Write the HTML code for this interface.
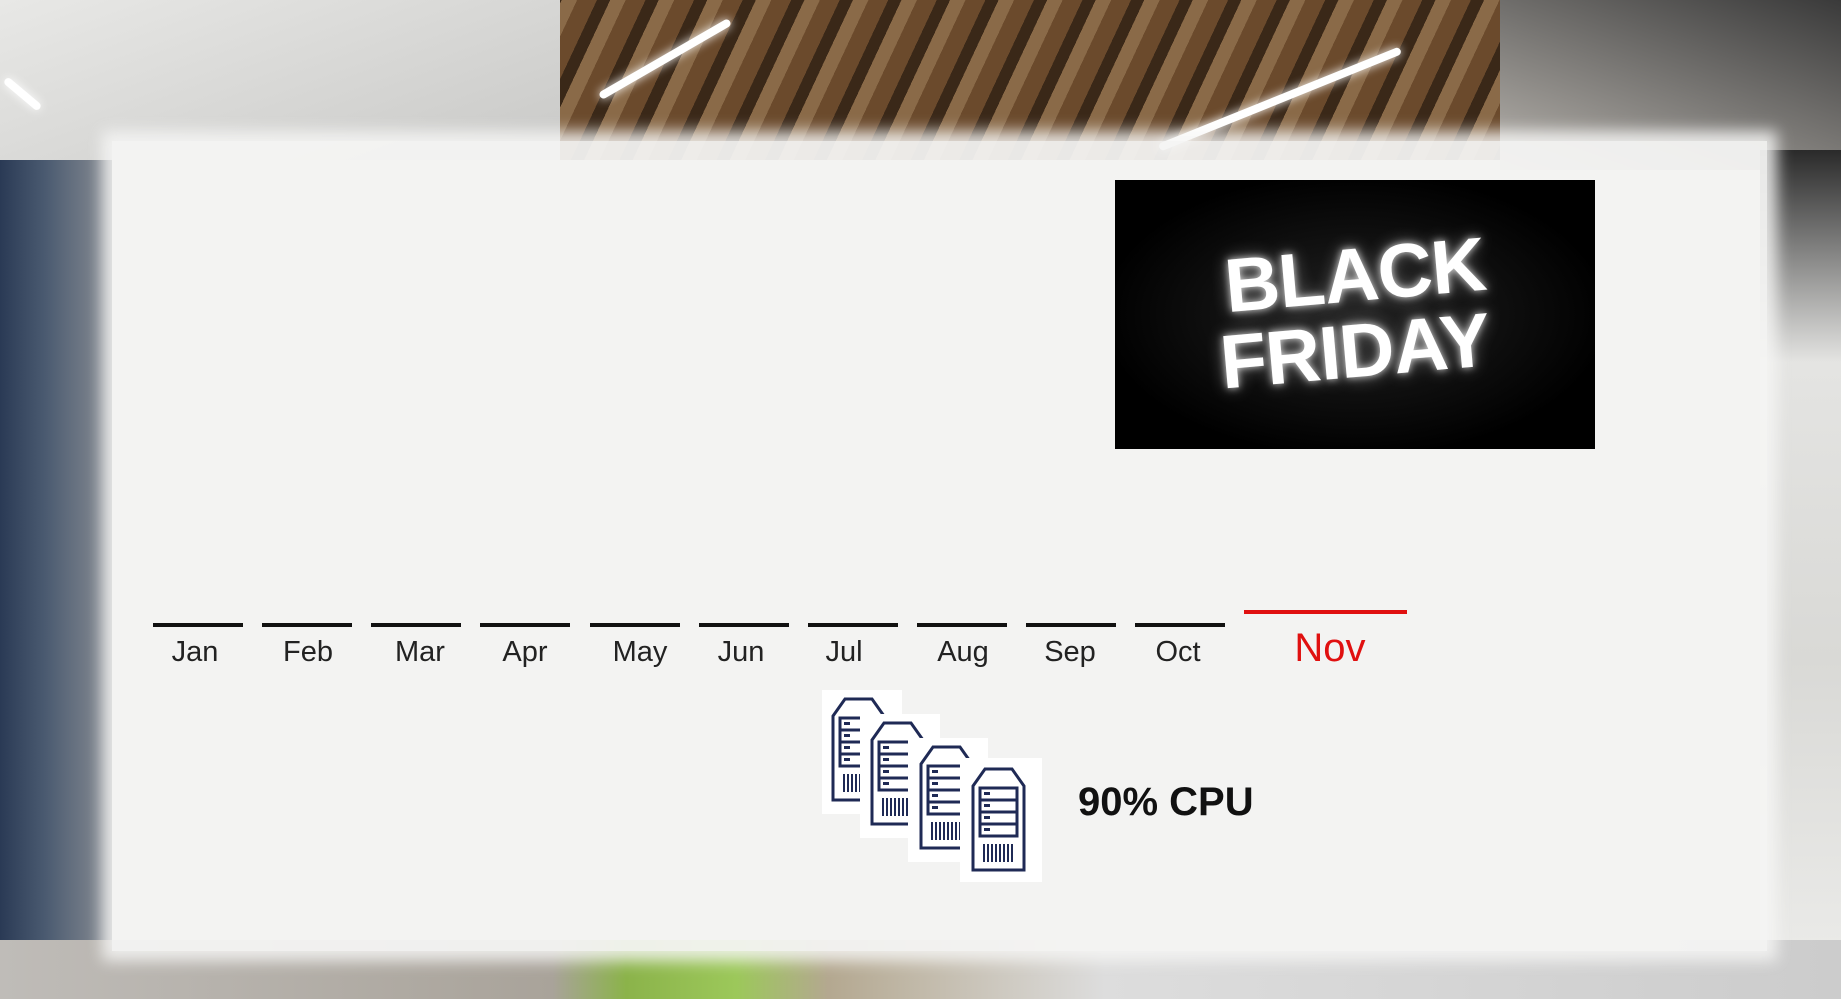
<!DOCTYPE html>
<html><head><meta charset="utf-8">
<style>
html,body{margin:0;padding:0}
body{width:1841px;height:999px;position:relative;overflow:hidden;font-family:"Liberation Sans",sans-serif;
background:#dcdad6;}
.wood{position:absolute;left:480px;top:0;width:1200px;height:160px;
background:repeating-linear-gradient(115deg,#6b4a2c 0 18px,#3a2818 18px 30px,#8a6a48 30px 44px);}
.ceilL{position:absolute;left:0;top:0;width:560px;height:160px;background:linear-gradient(160deg,#e8e8e6,#c9c9c7);}
.ceilR{position:absolute;left:1500px;top:0;width:341px;height:170px;background:linear-gradient(200deg,#3a3a3a,#b8b4ae);}
.leftside{position:absolute;left:0;top:160px;width:112px;height:839px;background:linear-gradient(90deg,#2a3a55,#4a5a70 40%,#8a8e94);}
.floor{position:absolute;left:0;top:940px;width:1841px;height:59px;background:linear-gradient(90deg,#bfbcb8 0,#a9a39a 30%,#8bb34a 34%,#9cc85a 40%,#b4a890 45%,#ddd 60%,#ccc 100%);}
.rightside{position:absolute;left:1760px;top:150px;width:81px;height:849px;background:linear-gradient(180deg,#2a2a2a 0,#e4e4e2 25%,#d9d9d6 60%,#ededeb 100%);}
.light{position:absolute;height:8px;background:#fff;box-shadow:0 0 10px #fff;border-radius:4px}
.panel{position:absolute;left:112px;top:141px;width:1655px;height:810px;background:rgba(244,244,243,0.94);
box-shadow:0 0 14px 10px rgba(246,246,245,0.85);}
.bf{position:absolute;left:1115px;top:180px;width:480px;height:269px;background:radial-gradient(ellipse at center,#222 0,#000 75%);}
.bf div{position:absolute;left:0;width:100%;text-align:center;color:#fff;font-weight:bold;font-size:76px;letter-spacing:-1px;
text-shadow:0 0 8px rgba(255,255,255,.8),0 0 18px rgba(255,255,255,.4);transform:rotate(-5deg)}
.line{position:absolute;top:623px;width:90px;height:4px;background:#111}
.lab{position:absolute;top:636px;width:120px;text-align:center;font-size:29px;color:#222}
.card{position:absolute;background:#fff}
.cpu{position:absolute;left:1078px;top:780px;font-size:40px;font-weight:bold;color:#111}
</style></head><body>
<div class="wood"></div>
<div class="ceilL"></div>
<div class="ceilR"></div>
<div class="light" style="left:590px;top:55px;width:150px;transform:rotate(-30deg)"></div>
<div class="light" style="left:1150px;top:95px;width:260px;transform:rotate(-22deg)"></div>
<div class="light" style="left:0;top:90px;width:45px;transform:rotate(40deg)"></div>
<div class="leftside"></div>
<div class="rightside"></div>
<div class="floor"></div>
<div class="panel"></div>

<div class="bf"><div style="top:52px">BLACK</div><div style="top:128px">FRIDAY</div></div>

<div class="line" style="left:153px"></div><div class="lab" style="left:135px">Jan</div>
<div class="line" style="left:262px"></div><div class="lab" style="left:248px">Feb</div>
<div class="line" style="left:371px"></div><div class="lab" style="left:360px">Mar</div>
<div class="line" style="left:480px"></div><div class="lab" style="left:465px">Apr</div>
<div class="line" style="left:590px"></div><div class="lab" style="left:580px">May</div>
<div class="line" style="left:699px"></div><div class="lab" style="left:681px">Jun</div>
<div class="line" style="left:808px"></div><div class="lab" style="left:784px">Jul</div>
<div class="line" style="left:917px"></div><div class="lab" style="left:903px">Aug</div>
<div class="line" style="left:1026px"></div><div class="lab" style="left:1010px">Sep</div>
<div class="line" style="left:1135px"></div><div class="lab" style="left:1118px">Oct</div>
<div style="position:absolute;left:1244px;top:610px;width:163px;height:4px;background:#e01010"></div>
<div style="position:absolute;left:1270px;top:626px;width:120px;text-align:center;font-size:40px;color:#e01010">Nov</div>

<svg width="0" height="0" style="position:absolute">
<defs>
<g id="srv">
<path d="M3 20 L3 104 L54 104 L54 20 L42 3 L15 3 Z" fill="#fff" stroke="#1f2a55" stroke-width="3"/>
<rect x="10" y="22" width="37" height="48" fill="none" stroke="#1f2a55" stroke-width="3"/>
<line x1="10" y1="34" x2="47" y2="34" stroke="#1f2a55" stroke-width="3"/>
<line x1="10" y1="46" x2="47" y2="46" stroke="#1f2a55" stroke-width="3"/>
<line x1="10" y1="58" x2="47" y2="58" stroke="#1f2a55" stroke-width="3"/>
<rect x="14" y="26" width="6" height="3" fill="#1f2a55"/>
<rect x="14" y="38" width="6" height="3" fill="#1f2a55"/>
<rect x="14" y="50" width="6" height="3" fill="#1f2a55"/>
<rect x="14" y="62" width="6" height="3" fill="#1f2a55"/>
<path d="M14 78v18M18 78v18M22 78v18M26 78v18M30 78v18M34 78v18M38 78v18M42 78v18" stroke="#1f2a55" stroke-width="2"/>
</g>
</defs></svg>
<div class="card" style="left:822px;top:690px;width:80px;height:124px"></div>
<svg style="position:absolute;left:830px;top:696px" width="58" height="108"><use href="#srv"/></svg>
<div class="card" style="left:860px;top:714px;width:80px;height:124px"></div>
<svg style="position:absolute;left:869px;top:720px" width="58" height="108"><use href="#srv"/></svg>
<div class="card" style="left:908px;top:738px;width:80px;height:124px"></div>
<svg style="position:absolute;left:918px;top:744px" width="58" height="108"><use href="#srv"/></svg>
<div class="card" style="left:960px;top:758px;width:82px;height:124px"></div>
<svg style="position:absolute;left:970px;top:766px" width="58" height="108"><use href="#srv"/></svg>

<div class="cpu">90% CPU</div>
</body></html>
